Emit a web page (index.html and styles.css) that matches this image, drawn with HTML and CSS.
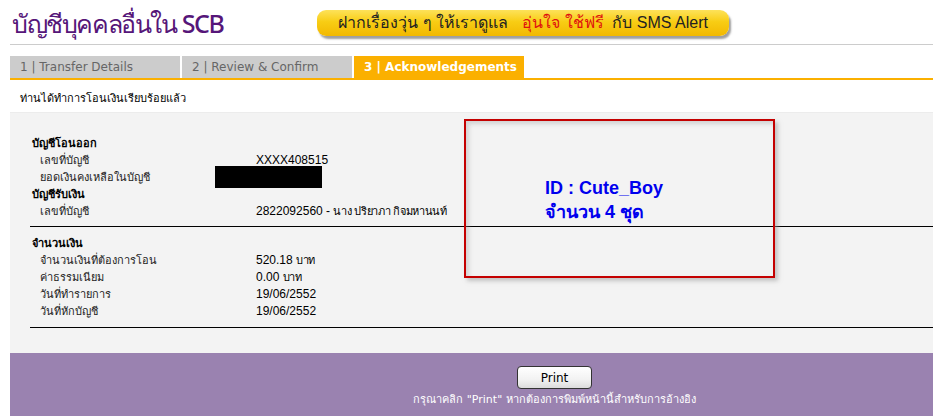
FILE: index.html
```html
<!DOCTYPE html>
<html lang="th">
<head>
<meta charset="utf-8">
<title>บัญชีบุคคลอื่นใน SCB</title>
<link rel="stylesheet" href="styles.css">
</head>
<body>
<div class="page">
  <header class="header">
    <h1 class="title">บัญชีบุคคลอื่นใน SCB</h1>
    <div class="banner">ฝากเรื่องวุ่น ๆ ให้เราดูแล <span class="banner-red">อุ่นใจ ใช้ฟรี</span> กับ SMS Alert</div>
  </header>

  <nav class="tabs">
    <div class="tab">1 | Transfer Details</div>
    <div class="tab">2 | Review &amp; Confirm</div>
    <div class="tab tab-active">3 | Acknowledgements</div>
  </nav>

  <p class="message">ท่านได้ทำการโอนเงินเรียบร้อยแล้ว</p>

  <section class="panel">
    <div class="group">
      <div class="heading">บัญชีโอนออก</div>
      <div class="row"><span class="label">เลขที่บัญชี</span><span class="value">XXXX408515</span></div>
      <div class="row"><span class="label">ยอดเงินคงเหลือในบัญชี</span><span class="value"><span class="redact"></span></span></div>
      <div class="heading">บัญชีรับเงิน</div>
      <div class="row"><span class="label">เลขที่บัญชี</span><span class="value">2822092560 - <span class="thai">นาง ปริยาภา กิจมหานนท์</span></span></div>
    </div>
    <div class="group">
      <div class="heading">จำนวนเงิน</div>
      <div class="row"><span class="label">จำนวนเงินที่ต้องการโอน</span><span class="value">520.18 <span class="thai">บาท</span></span></div>
      <div class="row"><span class="label">ค่าธรรมเนียม</span><span class="value">0.00 <span class="thai">บาท</span></span></div>
      <div class="row"><span class="label">วันที่ทำรายการ</span><span class="value">19/06/2552</span></div>
      <div class="row"><span class="label">วันที่หักบัญชี</span><span class="value">19/06/2552</span></div>
    </div>

    <div class="note">
      <div class="note-line">ID : Cute_Boy</div>
      <div class="note-line">จำนวน 4 ชุด</div>
    </div>
  </section>

  <footer class="footer">
    <button class="print" type="button">Print</button>
    <p class="footer-text">กรุณาคลิก "Print" หากต้องการพิมพ์หน้านี้สำหรับการอ้างอิง</p>
  </footer>
</div>
</body>
</html>
```

FILE: styles.css
```css
html, body {
  margin: 0;
  padding: 0;
  background: #ffffff;
}

body {
  font-family: Tahoma, "DejaVu Sans", "Noto Sans", sans-serif;
  color: #000;
  overflow: hidden;
}

.page {
  padding-left: 10px;
  width: 923px;
}

.header {
  display: flex;
  align-items: flex-start;
  height: 44px;
  border-bottom: 1px solid #cccccc;
}

.title {
  margin: 7px 0 0 2px;
  width: 305px;
  font-family: "Noto Sans", "DejaVu Sans", sans-serif;
  font-size: 25px;
  font-weight: 500;
  line-height: 32px;
  letter-spacing: -1.4px;
  color: #561679;
  white-space: nowrap;
}

.banner {
  margin-top: 10px;
  width: 412px;
  height: 26px;
  border-radius: 9px;
  background: linear-gradient(#fde25a 0%, #f8cd14 45%, #f2b800 100%);
  box-shadow: 2px 3px 2px rgba(80, 80, 80, 0.55);
  font-family: "Liberation Sans", "DejaVu Sans", sans-serif;
  font-size: 16px;
  line-height: 26px;
  color: #222;
  text-align: center;
  white-space: nowrap;
}

.banner-red {
  color: #e0120e;
  margin: 0 4px 0 10px;
}

.tabs {
  display: flex;
  gap: 2px;
  margin-top: 11px;
  border-bottom: 2px solid #fbb000;
}

.tab {
  width: 160px;
  height: 22px;
  padding-left: 10px;
  background: #cccccc;
  color: #666666;
  font-family: Verdana, "DejaVu Sans", sans-serif;
  font-size: 12px;
  line-height: 23px;
  white-space: nowrap;
}

.tab-active {
  background: #fbb000;
  color: #ffffff;
  font-weight: bold;
}

.message {
  margin: 0;
  padding: 11px 0 0 10px;
  height: 21px;
  font-size: 11px;
  line-height: 16px;
}

.panel {
  position: relative;
  margin-top: 0;
  padding: 22px 0 25px 20px;
  background: #f3f3f3;
  border-top: 1px solid #ececec;
}

.group {
  border-bottom: 1px solid #000;
  padding: 0 0 6px 0;
}

.group + .group {
  padding-top: 8px;
  padding-bottom: 7px;
}

.heading {
  padding-left: 2px;
  font-size: 11px;
  font-weight: bold;
  line-height: 17px;
  height: 17px;
}

.row {
  display: flex;
  height: 17px;
  line-height: 17px;
  font-size: 11px;
}

.label {
  width: 216px;
  padding-left: 10px;
  color: #222;
  white-space: nowrap;
}

.value {
  font-family: "Liberation Sans", Arial, sans-serif;
  font-size: 12px;
  color: #000;
  white-space: nowrap;
}

.thai {
  font-size: 11px;
  letter-spacing: -0.3px;
}

.redact {
  display: inline-block;
  vertical-align: top;
  width: 107px;
  height: 22px;
  margin: -3px 0 0 -41px;
  background: #000;
}

.note {
  position: absolute;
  left: 454px;
  top: 6px;
  width: 311px;
  height: 159px;
  box-sizing: border-box;
  border: 2px solid #c40000;
  box-shadow: inset 3px 3px 4px rgba(150, 150, 150, 0.35), 3px 3px 4px rgba(150, 150, 150, 0.5);
  padding: 55px 0 0 79px;
}

.note-line {
  font-family: "Liberation Sans", Arial, sans-serif;
  font-size: 18px;
  font-weight: bold;
  line-height: 24px;
  color: #0000ee;
  white-space: nowrap;
}

.footer {
  display: flex;
  flex-direction: column;
  align-items: center;
  padding: 13px 0 8px 166px;
  background: #9a82b0;
  height: 63px;
  box-sizing: border-box;
}

.print {
  width: 75px;
  height: 25px;
  border: 1px solid #333;
  border-radius: 4px;
  background: linear-gradient(#ffffff, #f2f2f2 60%, #dcdcdc);
  font-family: Tahoma, "DejaVu Sans", sans-serif;
  font-size: 12px;
  color: #000;
  padding: 0;
}

.footer-text {
  margin: 3px 0 0 0;
  font-size: 11px;
  line-height: 16px;
  color: #ffffff;
  white-space: nowrap;
}
```
